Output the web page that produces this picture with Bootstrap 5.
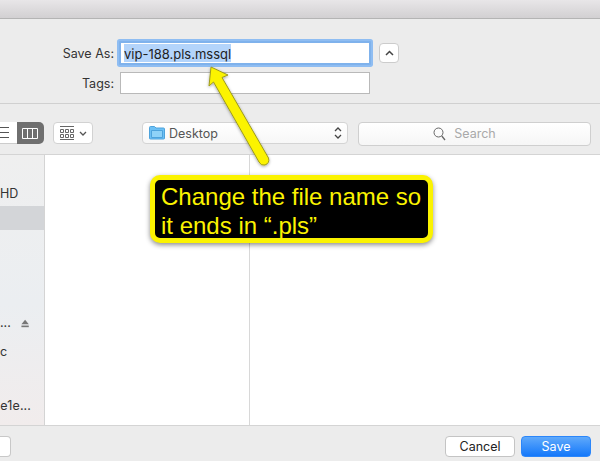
<!DOCTYPE html>
<html lang="en">
<head>
<meta charset="utf-8">
<title>Save dialog</title>
<link href="https://cdn.jsdelivr.net/npm/bootstrap@5.3.0/dist/css/bootstrap.min.css" rel="stylesheet">
<style>
html,body{height:461px;overflow:hidden;margin:0}
body{width:600px;background:#ececec;font-family:Inter,"Liberation Sans",sans-serif;font-size:12px;color:#2a2a2a;position:relative}
.dlg-title{height:19px;background:linear-gradient(#e8e6e8,#d2d0d2);border-bottom:1px solid #b4b4b4}
.dlg-form{height:85px;border-bottom:1px solid #d0d0d0;padding-top:22px}
.form-line{height:24px}
.form-line+.form-line{margin-top:7px;height:22px}
.form-lbl{width:114px;text-align:right;font-size:12.5px;color:#333;padding-top:2px}
.file-input{margin-left:6px;width:250px;height:22px;background:#fff;border:1px solid #b9b9b9;font-size:13px;line-height:20px;padding-left:3px;color:#222}
.file-input.is-on{margin-left:5px;width:252px;height:24px;border:2px solid #7fb2ec;box-shadow:0 0 0 2px #8fbdf2;border-radius:1px;padding:1px 0 0 3px;line-height:18px}
.sel-text{background:#b3d4fb;display:inline-block;height:18px;line-height:18px;padding-top:1px;vertical-align:top}
.up-btn{width:20px;height:20px;margin-left:8px;background:#fff;border:1px solid #ccc;border-radius:4px}
.dlg-tools{height:51px;border-bottom:1px solid #d4d4d4;padding-top:18px}
.view-seg{width:44px;height:22px;border-radius:0 5px 5px 0;overflow:hidden}
.seg-list{width:17px;background:#fff;border-bottom:1px solid #ccc}
.seg-cols{width:27px;background:#6f6f6f}
.arrange-btn{width:40px;height:22px;margin-left:9px;background:#fff;border:1px solid #d2d2d2;border-radius:4px}
.folder-sel{width:206px;height:22px;margin-left:49px;background:linear-gradient(#fff,#f7f7f7);border:1px solid #d4d4d4;border-radius:4px;padding:0 5px 0 6px;font-size:12.5px;color:#555}
.folder-name{padding-top:2px}
.search-box{width:233px;height:24px;margin-left:10px;padding-right:20px;background:linear-gradient(#fff,#f6f6f6);border:1px solid #cfcfcf;border-radius:4px;color:#a9a9a9;font-size:12.5px}
.dlg-main{height:271px;border-bottom:1px solid #d4d4d4}
.side-pane{width:45px;flex:none;border-right:1px solid #d4d4d4;background:linear-gradient(#efefef,#ebeef1 55%,#f1ecec);overflow:hidden;font-size:12.5px;color:#333}
.side-row{height:24px;line-height:24px;text-align:right}
.side-hd{margin-top:27px;padding-right:28px;white-space:nowrap}
.side-row.is-sel{background:#d3d5d8;margin-top:0}
.side-gap{height:81px}
.side-eject{display:flex;justify-content:flex-end;align-items:center;gap:10px;padding-right:15px;height:24px}
.side-c{text-align:left;height:24px;line-height:24px;margin-top:5px}
.side-e{height:24px;line-height:24px;text-align:right;padding-right:13px;margin-top:30px;letter-spacing:.1px}
.col-pane{width:205px;flex:none;background:#fff;border-right:1px solid #d8d8d8}
.rest-pane{flex:1;background:#fff}
.dlg-foot{height:35px;padding-right:9px}
.new-btn{width:11px;height:21px;background:#fff;border:1px solid #c8c8c8;border-left:0;border-radius:0 4px 4px 0;margin-top:10px}
.cancel-btn,.save-btn{width:70px;height:21px;border-radius:4px;font-size:12.5px;line-height:19px;text-align:center;margin-top:10px}
.cancel-btn{background:#fff;border:1px solid #c4c4c4;color:#222;margin-right:6px}
.save-btn{background:linear-gradient(#5fa9fb,#1478fa);border:1px solid #2b86fa;color:#fff}
.note-arrow{position:absolute;left:0;top:0}
.note-box{position:absolute;left:150px;top:175px;width:283px;height:68px;background:#000;border:5px solid #fbf300;border-radius:10px;box-shadow:0 2px 5px rgba(0,0,0,.45);color:#fbf300;font-family:"Liberation Sans",Arial,sans-serif;font-size:24px;line-height:29px;padding:2px 0 0 6px;white-space:nowrap}
</style>
</head>
<body>
<div class="dlg-title"></div>
<div class="dlg-form">
  <div class="form-line d-flex align-items-center">
    <div class="form-lbl">Save As:</div>
    <div class="file-input is-on"><span class="sel-text">vip-188.pls.mssql</span></div>
    <div class="up-btn d-flex align-items-center justify-content-center">
      <svg width="9" height="6" viewBox="0 0 9 6"><path d="M1 5 4.500 1.500 8 5" fill="none" stroke="#444" stroke-width="1.500"/></svg>
    </div>
  </div>
  <div class="form-line d-flex align-items-center">
    <div class="form-lbl">Tags:</div>
    <div class="file-input"></div>
  </div>
</div>
<div class="dlg-tools d-flex align-items-start">
  <div class="view-seg d-flex">
    <div class="seg-list d-flex align-items-center">
      <svg width="10" height="12" viewBox="0 0 10 12"><path d="M0 .500H9M0 5.500H9M0 10.500H9" stroke="#555" stroke-width="1"/></svg>
    </div>
    <div class="seg-cols d-flex align-items-center justify-content-center">
      <svg width="17" height="11" viewBox="0 0 17 11"><path d="M.5.500h15v10H.5zM5.500.500v10M10.500.500v10" fill="none" stroke="#fff"/></svg>
    </div>
  </div>
  <div class="arrange-btn d-flex align-items-center justify-content-center gap-1">
    <svg width="15" height="14" viewBox="0 0 15 14"><path d="M0 .500H14M0 13.500H14" stroke="#666"/><path d="M.5 3.500h3v3h-3zM5.500 3.500h3v3h-3zM10.500 3.500h3v3h-3zM.5 8.500h3v3h-3zM5.500 8.500h3v3h-3zM10.500 8.500h3v3h-3z" fill="none" stroke="#666"/></svg>
    <svg width="8" height="5" viewBox="0 0 8 5"><path d="M1 1 4 4 7 1" fill="none" stroke="#555" stroke-width="1.300"/></svg>
  </div>
  <div class="folder-sel d-flex align-items-center">
    <svg width="16" height="14" viewBox="0 0 16 14" class="me-1 flex-none"><path d="M.5 1.500q0-1 1-1h4l1.500 1.500h7.500q1 0 1 1v9.500q0 .5-1 .5h-13q-1 0-1-.5z" fill="#6cc0f5" stroke="#4da3dc"/><path d="M2.500 4.500h11v7h-11z" fill="#8ed2f8" stroke="#4da3dc"/></svg>
    <span class="folder-name">Desktop</span>
    <svg width="8" height="14" viewBox="0 0 8 14" class="ms-auto"><path d="M1 5 4 2 7 5M1 9 4 12 7 9" fill="none" stroke="#444" stroke-width="1.300"/></svg>
  </div>
  <div class="search-box d-flex align-items-center justify-content-center gap-1">
    <svg width="13" height="14" viewBox="0 0 13 14" class="me-1"><circle cx="5.500" cy="5.500" r="4.500" fill="none" stroke="#666"/><path d="M8.800 9 12 13" stroke="#666" stroke-width="1.300"/></svg>
    <span>Search</span>
  </div>
</div>
<div class="dlg-main d-flex">
  <div class="side-pane">
    <div class="side-row side-hd">HD</div>
    <div class="side-row is-sel"></div>
    <div class="side-gap"></div>
    <div class="side-eject"><span>...</span>
      <svg width="10" height="9" viewBox="0 0 10 9"><path d="M5 0 9.500 5.500H.5z" fill="#777"/><path d="M.5 7h9v2h-9z" fill="#777"/></svg>
    </div>
    <div class="side-c">c</div>
    <div class="side-e">e1e...</div>
  </div>
  <div class="col-pane"></div>
  <div class="rest-pane"></div>
</div>
<div class="dlg-foot d-flex justify-content-between align-items-start">
  <div class="new-btn"></div>
  <div class="d-flex">
    <div class="cancel-btn">Cancel</div>
    <div class="save-btn">Save</div>
  </div>
</div>
<svg class="note-arrow" width="600" height="461" viewBox="0 0 600 461">
  <defs><filter id="sh" x="-20%" y="-20%" width="140%" height="140%"><feDropShadow dx="0" dy="1" stdDeviation="1.500" flood-color="#000" flood-opacity=".35"/></filter></defs>
  <path d="M211 67 228 75 222 77.500 268.500 158Q270 163 265 165 261 166 259 162L213.500 82 209 86Z" fill="#fbf300" stroke="#9c9a1e" stroke-width="1" stroke-linejoin="round" filter="url(#sh)"/>
</svg>
<div class="note-box">Change the file name so<br>it ends in “.pls”</div>
</body>
</html>
